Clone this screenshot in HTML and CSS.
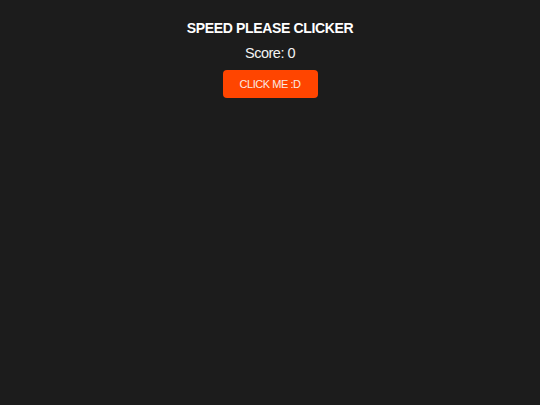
FILE: index.html
```html
<!DOCTYPE html>
<html>
<head>
<meta charset="utf-8">
<link rel="stylesheet" href="styles.css">
</head>
<body>
<main class="app">
  <h1 class="title">SPEED PLEASE CLICKER</h1>
  <p class="score">Score: 0</p>
  <button class="click-btn">CLICK ME :D</button>
</main>
</body>
</html>
```
FILE: styles.css
```css
html, body {
  margin: 0;
  padding: 0;
  background: #1c1c1c;
  height: 100%;
}
body {
  font-family: "Liberation Sans", Arial, sans-serif;
  color: #ffffff;
}
.app {
  display: flex;
  flex-direction: column;
  align-items: center;
  padding-top: 20px;
}
.title {
  margin: 0;
  font-size: 14px;
  font-weight: bold;
  line-height: 16px;
  letter-spacing: -0.35px;
}
.score {
  margin: 9px 0 0;
  font-size: 14.5px;
  line-height: 16px;
  letter-spacing: -0.5px;
  color: #f2f2f2;
}
.click-btn {
  margin-top: 9px;
  width: 95px;
  height: 28px;
  border: none;
  border-radius: 4px;
  background: #ff4500;
  color: #fbe9e2;
  font-family: "Liberation Sans", Arial, sans-serif;
  font-size: 11px;
  letter-spacing: -0.45px;
  padding: 0;
}
```
